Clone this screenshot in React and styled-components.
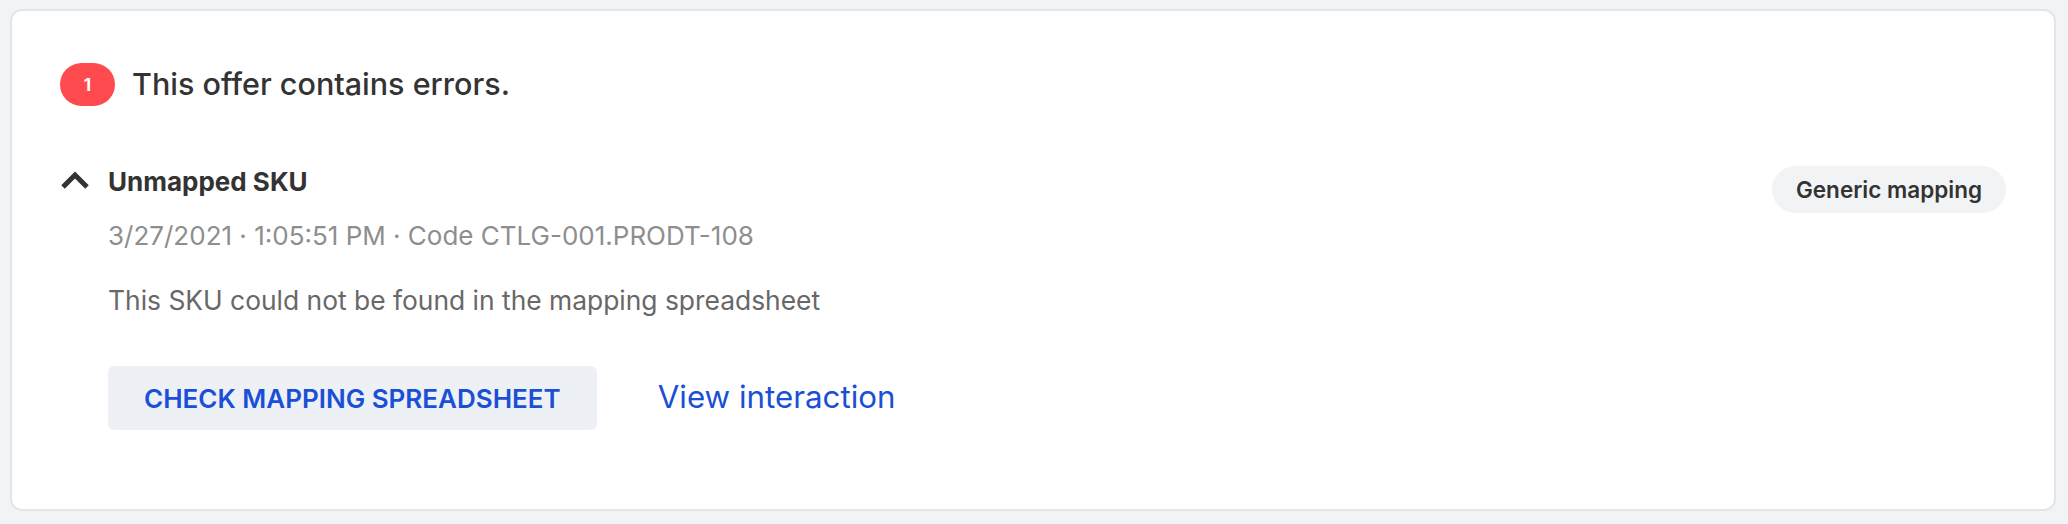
import React from "react";
import styled, { createGlobalStyle } from "styled-components";

const GlobalStyle = createGlobalStyle`
  * { box-sizing: border-box; }
  html, body {
    margin: 0;
    padding: 0;
    background: #f2f3f5;
    font-family: Inter, "Noto Sans", Arial, sans-serif;
  }
`;

export default function App() {
  return (
    <>
      <GlobalStyle />
      <Page>
        <Card>
          <Header>
            <Badge>1</Badge>
            <Heading>This offer contains errors.</Heading>
          </Header>

          <Issue>
            <Toggle aria-label="Collapse">
              <svg width="30" height="20" viewBox="0 0 30 20">
                <polyline
                  points="3,17 15,5 27,17"
                  fill="none"
                  stroke="#333"
                  strokeWidth="5"
                  strokeLinejoin="miter"
                />
              </svg>
            </Toggle>

            <Content>
              <IssueTitle>Unmapped SKU</IssueTitle>
              <Meta>3/27/2021 · 1:05:51 PM · Code CTLG-001.PRODT-108</Meta>
              <Description>
                This SKU could not be found in the mapping spreadsheet
              </Description>
              <Actions>
                <Button>CHECK MAPPING SPREADSHEET</Button>
                <LinkButton>View interaction</LinkButton>
              </Actions>
            </Content>

            <Pill>Generic mapping</Pill>
          </Issue>
        </Card>
      </Page>
    </>
  );
}

const Page = styled.div`
  padding: 9px 12px 13px 10px;
`;

// White panel with the list of errors
const Card = styled.section`
  background: #fff;
  border: 2px solid #e4e5e9;
  border-radius: 12px;
  padding: 52px 48px 79px 48px;
  min-height: 502px;
`;

const Header = styled.div`
  display: flex;
  align-items: center;
  gap: 17px;
`;

const Badge = styled.span`
  display: inline-flex;
  align-items: center;
  justify-content: center;
  width: 55px;
  height: 43px;
  border-radius: 22px;
  background: #ff4b4f;
  color: #fff;
  font-size: 17px;
  font-weight: 700;
`;

const Heading = styled.h2`
  margin: 0 0 2px;
  font-size: 30.5px;
  font-weight: 500;
  color: #333;
`;

// One error entry: chevron, details, tag
const Issue = styled.div`
  display: grid;
  grid-template-columns: 48px 1fr auto;
  align-items: start;
  margin-top: 58px;
`;

const Toggle = styled.button`
  border: 0;
  background: none;
  padding: 0;
  margin-top: 6px;
  width: 30px;
  height: 20px;
  display: block;
  cursor: pointer;
`;

const Content = styled.div`
  display: flex;
  flex-direction: column;
`;

const IssueTitle = styled.h3`
  margin: 2px 0 0;
  font-size: 26px;
  line-height: 32px;
  font-weight: 700;
  color: #333;
`;

const Meta = styled.div`
  margin-top: 22px;
  font-size: 26px;
  line-height: 32px;
  color: #8e8e8e;
`;

const Description = styled.p`
  margin: 32px 0 0;
  font-size: 26.4px;
  line-height: 32px;
  color: #686868;
`;

const Actions = styled.div`
  display: flex;
  align-items: center;
  gap: 61px;
  margin-top: 50px;
`;

const Button = styled.button`
  height: 64px;
  padding: 0 36px;
  border: 0;
  border-radius: 6px;
  background: #edf1f6;
  color: #1a4fd6;
  font-family: inherit;
  font-size: 26px;
  font-weight: 600;
  cursor: pointer;
`;

const LinkButton = styled.a`
  margin-bottom: 2px;
  font-size: 31.3px;
  color: #1a4fd6;
  cursor: pointer;
`;

const Pill = styled.span`
  margin-top: 2px;
  height: 47px;
  padding: 0 24px;
  display: inline-flex;
  align-items: center;
  border-radius: 24px;
  background: #f2f3f5;
  color: #333;
  font-size: 22.5px;
  font-weight: 600;
`;
